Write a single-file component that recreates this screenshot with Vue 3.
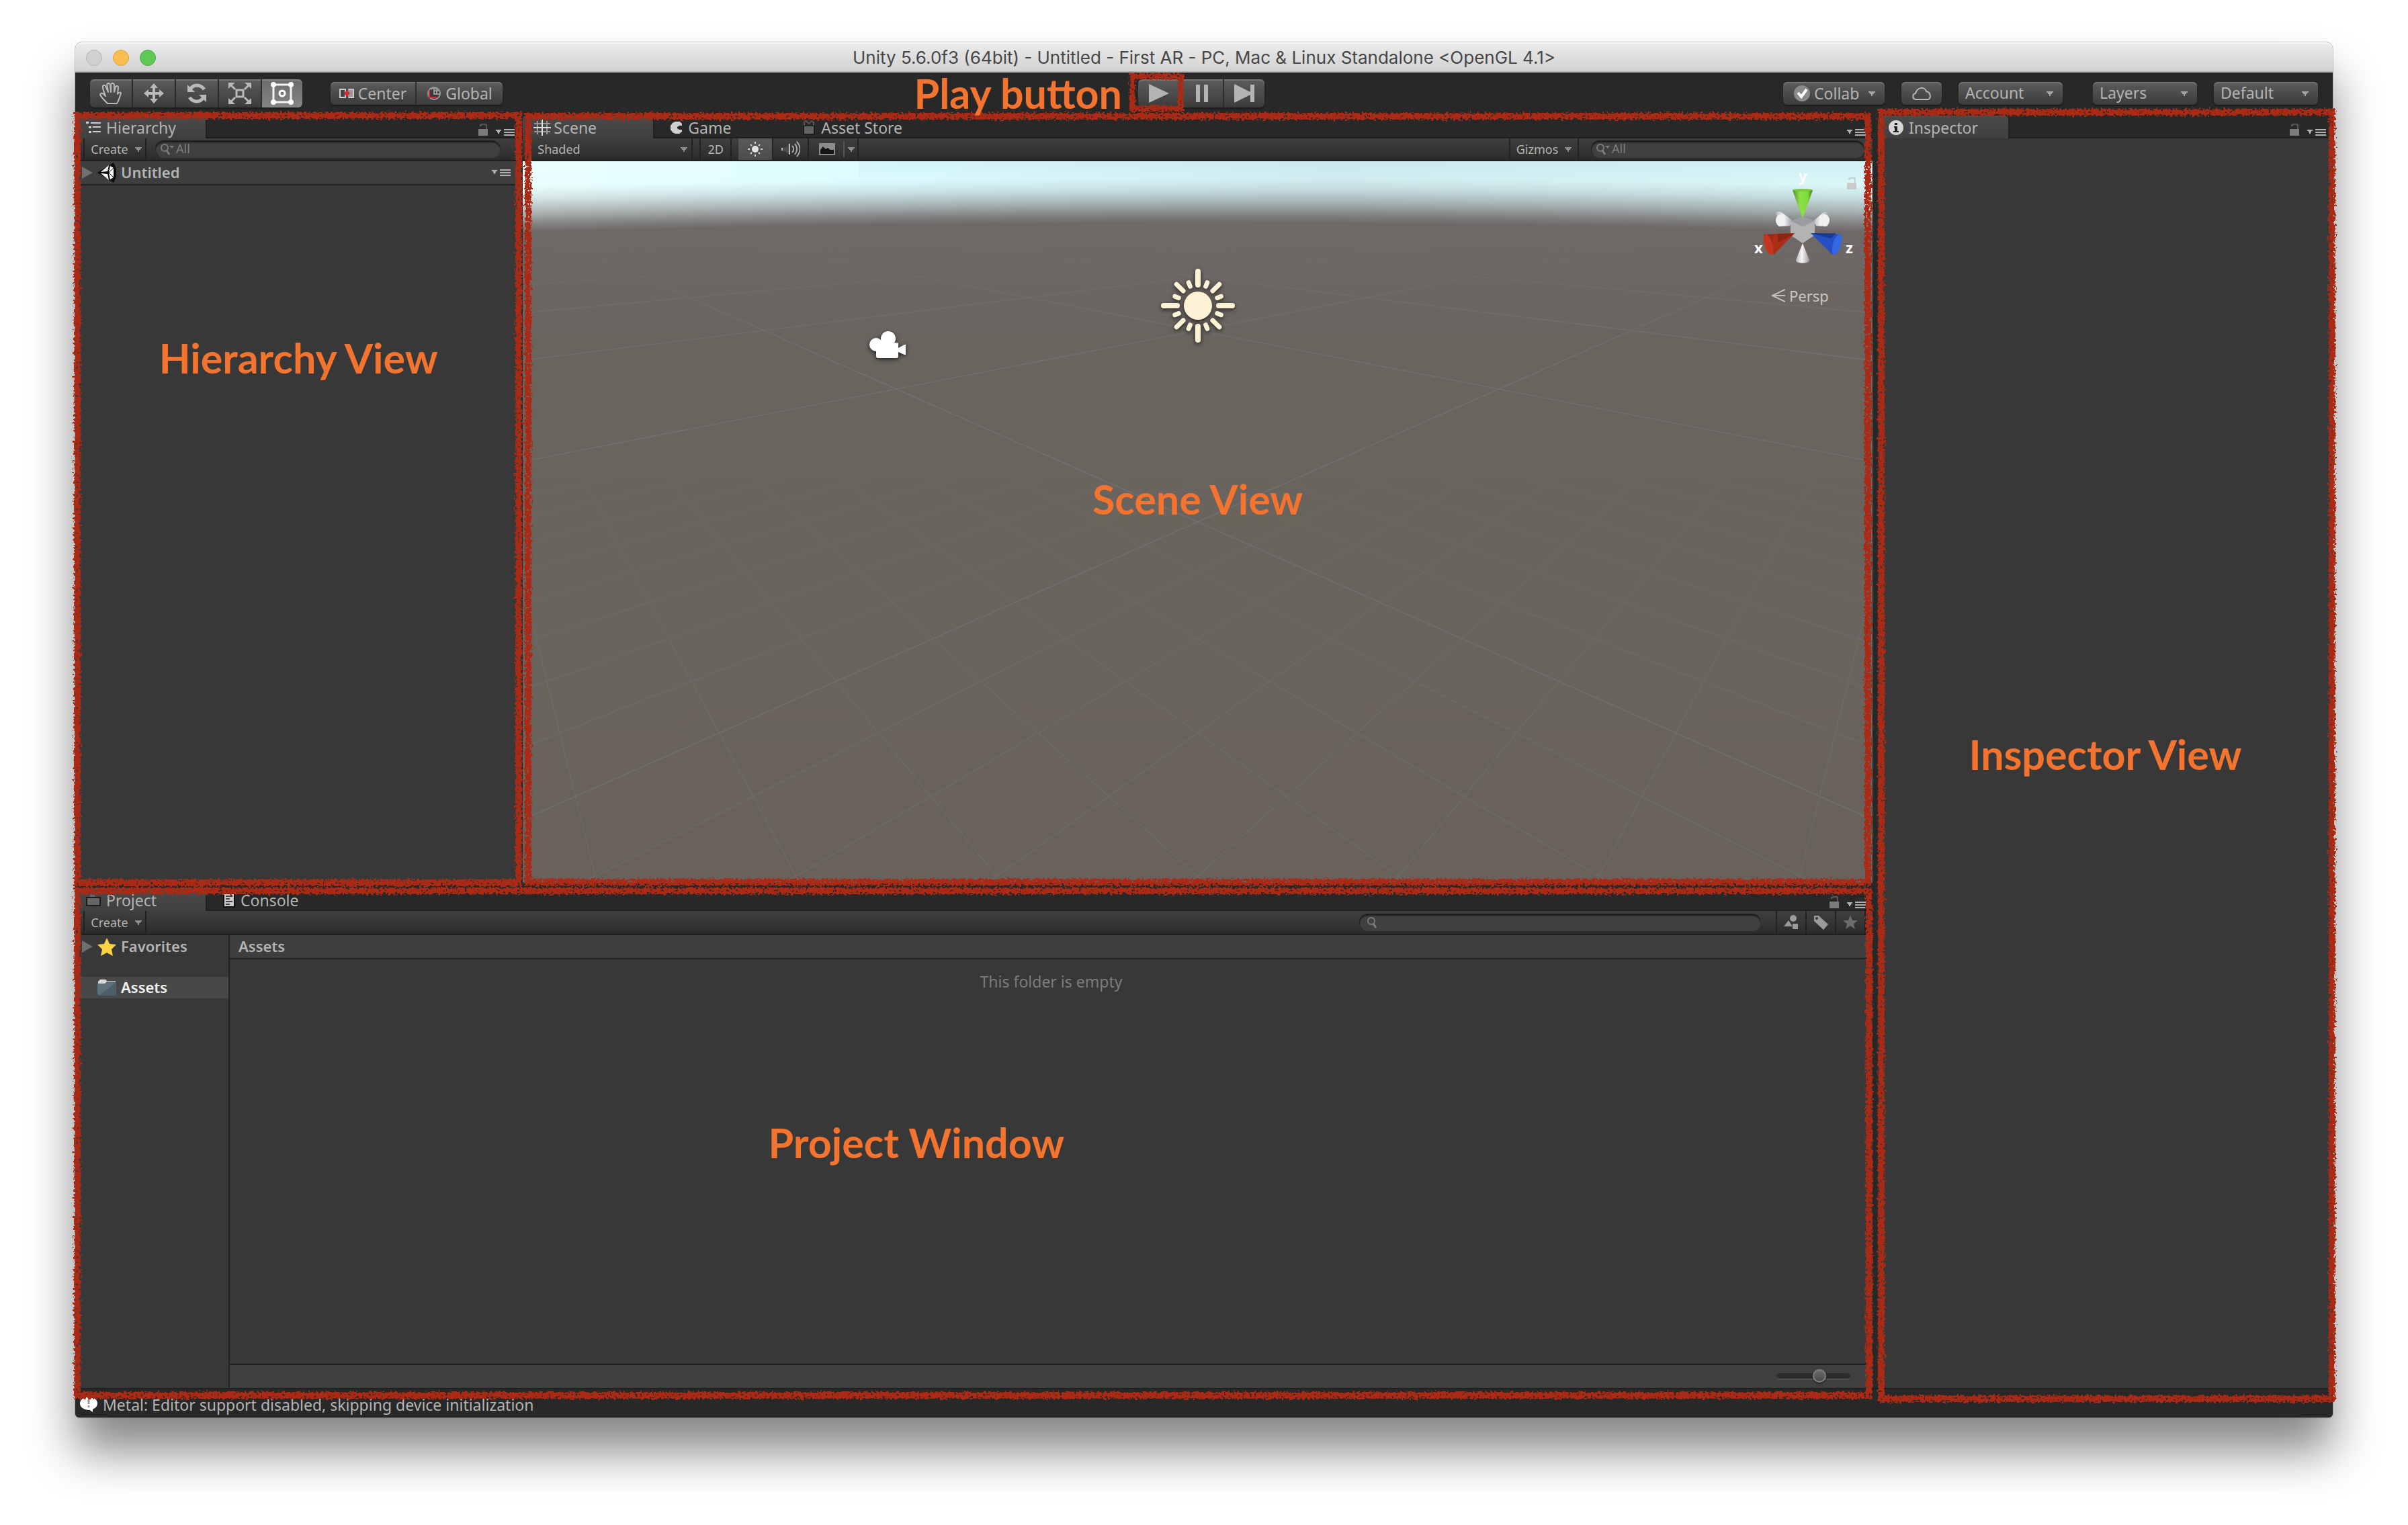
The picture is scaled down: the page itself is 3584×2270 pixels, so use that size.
<script setup>
import { ref } from 'vue'

const zoomLevel = ref(60)
const activeTool = ref('rect')

// Ground grid: every line passes through a vanishing point on either side.
const VP_LEFT = { x: -149, y: 28 }
const VP_RIGHT = { x: 2157, y: 28 }
const REACH = 1153

function gridLine(inverseDepth, side) {
  const slope = 1 / inverseDepth / REACH
  const run = 2400
  const start = side === 'left' ? VP_LEFT : VP_RIGHT
  const dir = side === 'left' ? 1 : -1
  return {
    x1: start.x,
    y1: start.y,
    x2: start.x + dir * run,
    y2: start.y + run * slope
  }
}

const majorLines = []
for (let m = 0; m < 7; m++) {
  for (const side of ['left', 'right']) {
    majorLines.push(gridLine(0.001965 + 0.0025 * m, side))
  }
}

const minorLines = []
for (let n = -7; n < 14; n++) {
  if (n === 0 || n === 10) continue
  for (const side of ['left', 'right']) {
    minorLines.push(gridLine(0.001965 + 0.00025 * n, side))
  }
}

const longRays = [0, 90, 180, 270]
const midRays = [45, 135, 225, 315]
const shortRays = [22, 68, 112, 158, 202, 248, 292, 338]
</script>

<template>
  <div class="page">
    <svg class="defs" width="0" height="0" aria-hidden="true">
      <filter id="crayon" x="-2%" y="-2%" width="104%" height="104%">
        <feTurbulence type="fractalNoise" baseFrequency="0.28" numOctaves="2" seed="4" result="noise" />
        <feDisplacementMap in="SourceGraphic" in2="noise" scale="9" xChannelSelector="R" yChannelSelector="G" result="rough" />
        <feColorMatrix in="noise" type="matrix" values="0 0 0 0 0  0 0 0 0 0  0 0 0 0 0  0 0 14 0 -4" result="grain" />
        <feComposite in="rough" in2="grain" operator="in" />
      </filter>
      <symbol id="caret" viewBox="0 0 10 7"><path d="M0 0h10v2H8v2H6v3H4V4H2V2H0z" /></symbol>
      <symbol id="lock" viewBox="0 0 14 18"><path d="M0 8h14v10H0z" /><path d="M3 4V2h2V1h6v1h1v6" fill="none" stroke="currentColor" stroke-width="2" opacity=".55" /></symbol>
      <symbol id="menu" viewBox="0 0 28 10"><path d="M0 1h8v2H6v2H5v2H3V5H2V3H0z" /><path d="M12 0h16v2H12zM12 4h16v2H12zM12 8h16v2H12z" /></symbol>
      <symbol id="loupe" viewBox="0 0 20 18"><circle cx="6" cy="6" r="5" fill="none" stroke="currentColor" stroke-width="2" /><path d="M9 10l4 6" stroke="currentColor" stroke-width="3" /></symbol>
      <symbol id="fold" viewBox="0 0 16 18"><path d="M0 0l16 9-16 9z" /></symbol>
    </svg>

    <div class="window">
      <header class="titlebar">
        <div class="lights">
          <button class="light off" aria-label="Close"></button>
          <button class="light amber" aria-label="Minimize"></button>
          <button class="light green" aria-label="Zoom"></button>
        </div>
        <h1>Unity 5.6.0f3 (64bit) - Untitled - First AR - PC, Mac &amp; Linux Standalone &lt;OpenGL 4.1&gt;</h1>
      </header>

      <div class="toolbar">
        <div class="tools-left">
          <div class="group tall">
            <button class="tool" aria-label="Hand" @click="activeTool = 'hand'">
              <svg width="36" height="34" viewBox="0 0 36 34" fill="none" stroke="#b9b9b9" stroke-width="2" stroke-linejoin="round"><path d="M13 32c-4-4-9-9-11-13 1-3 4-3 6 0l2 2C8 15 5 9 6 6c2-2 4-1 5 2l3 7-2-11c1-3 4-3 5 0l1 11V4c1-3 4-3 5 0v11l2-8c2-2 4-1 4 1l-1 10c2-3 5-3 5-1-2 5-3 11-6 15z" /></svg>
            </button>
            <button class="tool" aria-label="Move" @click="activeTool = 'move'">
              <svg width="30" height="30" viewBox="0 0 30 30" fill="#b9b9b9"><path d="M13 5h4v8h8v4h-8v8h-4v-8H5v-4h8z" /><path d="M15 0l6 7H9zM15 30l6-7H9zM0 15l7-6v12zM30 15l-7-6v12z" /></svg>
            </button>
            <button class="tool" aria-label="Rotate" @click="activeTool = 'rotate'">
              <svg width="30" height="30" viewBox="0 0 30 30"><g fill="none" stroke="#b9b9b9" stroke-width="5"><path d="M5 9c5-8 15-8 21 0" /><path d="M25 21c-5 8-15 8-21 0" /></g><path d="M1 2v11h11zM29 28V17H18z" fill="#b9b9b9" /></svg>
            </button>
            <button class="tool" aria-label="Scale" @click="activeTool = 'scale'">
              <svg width="34" height="32" viewBox="0 0 34 32"><path d="M12 11h10v10H12z" fill="none" stroke="#b9b9b9" stroke-width="3" /><path d="M3 3l7 7M31 3l-7 7M3 29l7-7M31 29l-7-7" stroke="#b9b9b9" stroke-width="3" /><path d="M0 0h10L0 9zM34 0H24l10 9zM0 32h10L0 23zM34 32H24l10-9z" fill="#b9b9b9" /></svg>
            </button>
            <button class="tool" :class="{ active: activeTool === 'rect' }" aria-label="Rect" @click="activeTool = 'rect'">
              <svg width="36" height="34" viewBox="0 0 36 34"><path d="M5 4h26v26H5z" fill="none" stroke="#f4f4f4" stroke-width="3" /><g fill="#fff"><circle cx="5" cy="4" r="4" /><circle cx="31" cy="4" r="4" /><circle cx="5" cy="30" r="4" /><circle cx="31" cy="30" r="4" /></g><circle cx="18" cy="17" r="4" fill="none" stroke="#fff" stroke-width="3" /></svg>
            </button>
          </div>
          <div class="group">
            <button class="pivot">
              <svg width="22" height="14" viewBox="0 0 22 14"><path d="M1 1h8v12H1z" fill="#444" stroke="#ccc" stroke-width="2" /><path d="M13 0h9v14h-9z" fill="#999" /><path d="M14 1h7v12h-7" stroke="#ccc" stroke-width="2" fill="none" /><path d="M11 2l5 5-5 5-4-5z" fill="#d22c3c" /></svg>
              <span>Center</span>
            </button>
            <button class="pivot">
              <svg width="22" height="22" viewBox="0 0 22 22"><circle cx="11" cy="11" r="9" fill="#3a3a3a" stroke="#999" stroke-width="2" /><path d="M11 2v10h9M6 5c3-2 8-2 11 0M15 3v9M11 7h8" stroke="#999" stroke-width="2" fill="none" /><path d="M4 6v11h11" fill="none" stroke="#d22c3c" stroke-width="2" /></svg>
              <span>Global</span>
            </button>
          </div>
        </div>

        <div class="playback">
          <span class="label play-label">Play button</span>
          <div class="group tall">
            <button class="tool" aria-label="Play">
              <svg width="30" height="28" viewBox="0 0 30 28" fill="#b4b4b4"><path d="M0 0l30 14L0 28z" /></svg>
            </button>
            <button class="tool" aria-label="Pause">
              <svg width="18" height="26" viewBox="0 0 18 26" fill="#b4b4b4"><path d="M0 0h6v26H0zM12 0h6v26h-6z" /></svg>
            </button>
            <button class="tool" aria-label="Step">
              <svg width="30" height="28" viewBox="0 0 30 28" fill="#b4b4b4"><path d="M0 0l24 12V1h6v26h-6V16L0 28z" /></svg>
            </button>
          </div>
          <i class="frame play-frame"></i>
        </div>

        <div class="tools-right">
          <button class="pill collab">
            <svg width="24" height="28" viewBox="0 0 24 28"><circle cx="12" cy="14" r="12" fill="#8a8a8a" /><path d="M6 13l5 6 8-11" fill="none" stroke="#fff" stroke-width="4" /></svg>
            <span>Collab</span>
            <svg class="caret" width="10" height="7"><use href="#caret" /></svg>
          </button>
          <button class="pill cloud" aria-label="Cloud services">
            <svg width="28" height="20" viewBox="0 0 28 20" fill="none" stroke="#b9b9b9" stroke-width="2"><path d="M5 19c-5-1-5-8 0-9C7 1 19-1 21 7c6 1 8 9 3 12z" /></svg>
          </button>
          <label class="drop account"><select aria-label="Account"><option>Account</option></select><svg class="caret" width="10" height="7"><use href="#caret" /></svg></label>
          <label class="drop layers"><select aria-label="Layers"><option>Layers</option></select><svg class="caret" width="10" height="7"><use href="#caret" /></svg></label>
          <label class="drop"><select aria-label="Layout"><option>Default</option></select><svg class="caret" width="10" height="7"><use href="#caret" /></svg></label>
        </div>
      </div>

      <main class="dock">
        <div class="left">
          <div class="upper">
            <section class="panel hierarchy">
              <div class="tabs">
                <button class="tab selected">
                  <svg width="22" height="18" viewBox="0 0 22 18" fill="#cfcfcf"><path d="M0 0h4v3H0zM7 1h15v2H7zM4 7h4v3H4zM10 7h12v2H10zM4 14h4v3H4zM10 14h12v2H10z" /></svg>
                  <span>Hierarchy</span>
                </button>
                <div class="tab-tools">
                  <svg class="lock" width="14" height="18"><use href="#lock" /></svg>
                  <svg class="menu" width="28" height="10"><use href="#menu" /></svg>
                </div>
              </div>
              <div class="strip">
                <button class="strip-btn create">Create <svg class="caret" width="10" height="7"><use href="#caret" /></svg></button>
                <label class="search hier-search">
                  <svg width="20" height="18"><use href="#loupe" /><path d="M13 3h7l-3 4z" fill="currentColor" /></svg>
                  <input type="text" placeholder="All" aria-label="Search hierarchy" />
                </label>
              </div>
              <div class="row scene-row">
                <svg class="fold" width="16" height="18"><use href="#fold" /></svg>
                <svg width="28" height="30" viewBox="0 0 28 30"><path d="M0 15L24 0l4 9v12l-4 9z" fill="#0c0c0c" /><path d="M5 14L17 4l-2 9zM5 16l12 10-2-9zM19 5l5 3v14l-5 3-2-9 1-1-1-1z" fill="#fff" /><path d="M17 15l7-7M17 15l7 7" stroke="#0c0c0c" stroke-width="1" /></svg>
                <strong>Untitled</strong>
                <svg class="menu push" width="28" height="10"><use href="#menu" /></svg>
              </div>
              <i class="frame hier-frame"></i>
              <span class="label hier-label">Hierarchy View</span>
            </section>

            <section class="panel scene">
              <div class="tabs">
                <button class="tab selected snug">
                  <svg width="26" height="24" viewBox="0 0 26 24" fill="none" stroke-width="2"><path d="M6 2v20M20 2v20M1 6h24M1 18h24" stroke="#999" /><path d="M13 0v24M0 12h26" stroke="#e0e0e0" /></svg>
                  <span>Scene</span>
                </button>
                <button class="tab">
                  <svg width="18" height="20" viewBox="0 0 18 20"><path d="M12 1H7L3 3 0 7v6l3 4 4 2h6l4-3v-3h-4l-3-2V9l3-2h4V4l-3-3z" fill="#cfcfcf" /></svg>
                  <span>Game</span>
                </button>
                <button class="tab">
                  <svg width="20" height="22" viewBox="0 0 20 22"><path d="M1 8h18v14H1z" fill="#1a1a1a" /><path d="M3 9h14v11H3z" fill="#626262" /><path d="M3 8V3l3-2 4 4 4-4 3 2v5" fill="none" stroke="#555" stroke-width="2" /></svg>
                  <span>Asset Store</span>
                </button>
                <div class="tab-tools"><svg class="menu" width="28" height="10"><use href="#menu" /></svg></div>
              </div>
              <div class="strip">
                <label class="shading"><select aria-label="Draw mode"><option>Shaded</option></select><svg class="caret" width="10" height="7"><use href="#caret" /></svg></label>
                <button class="strip-btn two-d">2D</button>
                <button class="strip-btn lit" aria-label="Lighting">
                  <svg width="22" height="22" viewBox="0 0 22 22"><circle cx="11" cy="11" r="5" fill="#e4e4e4" /><path d="M11 0v3M11 19v3M0 11h3M19 11h3M4 4l2 2M16 16l2 2M4 18l2-2M16 6l2-2" stroke="#d4d4d4" stroke-width="2" /></svg>
                </button>
                <button class="strip-btn audio" aria-label="Audio">
                  <svg width="28" height="24" viewBox="0 0 28 24"><path d="M0 10h5l8-7v18l-8-6H0z" fill="#4a4a4a" /><path d="M12 4v16M1 10v4" stroke="#bbb" stroke-width="2" /><path d="M16 7c3 3 3 7 0 10M20 4c4 5 4 11 0 16M23 1c6 7 6 15 0 22" fill="none" stroke="#a9a9a9" stroke-width="2" /></svg>
                </button>
                <button class="strip-btn effects" aria-label="Effects">
                  <svg width="24" height="18" viewBox="0 0 24 18"><path d="M0 0h24v18H0z" fill="#8c8c8c" /><path d="M2 16v-6l4-5 4 4 3-2 4 3h5v6z" fill="#151515" /></svg>
                  <i class="tick"></i>
                  <svg class="caret" width="10" height="7"><use href="#caret" /></svg>
                </button>
                <button class="strip-btn gizmos">Gizmos <svg class="caret" width="10" height="7"><use href="#caret" /></svg></button>
                <label class="search scene-search">
                  <svg width="20" height="18"><use href="#loupe" /><path d="M13 3h7l-3 4z" fill="currentColor" /></svg>
                  <input type="text" placeholder="All" aria-label="Search scene" />
                </label>
              </div>

              <div class="viewport">
                <svg class="world" viewBox="0 0 2008 1074" preserveAspectRatio="none" aria-hidden="true">
                  <defs>
                    <linearGradient id="ground" x1="0" y1="0" x2="0" y2="1">
                      <stop offset="0" stop-color="#6f6969" /><stop offset=".1" stop-color="#6e6867" />
                      <stop offset=".25" stop-color="#6a645f" /><stop offset="1" stop-color="#69625c" />
                    </linearGradient>
                    <linearGradient id="air" x1="0" y1="0" x2="1" y2="0">
                      <stop offset="0" stop-color="#ebffff" /><stop offset=".28" stop-color="#dcfcff" />
                      <stop offset=".6" stop-color="#d2edf0" /><stop offset="1" stop-color="#daf7f9" />
                    </linearGradient>
                    <radialGradient id="haze" gradientUnits="userSpaceOnUse" cx="0" cy="0" r="1" gradientTransform="translate(1004 337) scale(4102 335)">
                      <stop offset=".73" stop-color="#000" /><stop offset=".765" stop-color="#2c2c2c" />
                      <stop offset=".82" stop-color="#888" /><stop offset=".88" stop-color="#d8d8d8" />
                      <stop offset=".93" stop-color="#fff" />
                    </radialGradient>
                    <linearGradient id="zenith" x1="0" y1="0" x2="0" y2="1">
                      <stop offset="0" stop-color="#b4d8e6" stop-opacity=".45" /><stop offset="1" stop-color="#b4d8e6" stop-opacity="0" />
                    </linearGradient>
                    <linearGradient id="farFade" x1="0" y1="100" x2="0" y2="300" gradientUnits="userSpaceOnUse">
                      <stop offset="0" stop-color="#000" /><stop offset="1" stop-color="#fff" />
                    </linearGradient>
                    <linearGradient id="nearFade" x1="0" y1="360" x2="0" y2="800" gradientUnits="userSpaceOnUse">
                      <stop offset="0" stop-color="#000" /><stop offset="1" stop-color="#fff" />
                    </linearGradient>
                    <mask id="sky"><rect width="2008" height="130" fill="url(#haze)" /></mask>
                    <mask id="far" maskUnits="userSpaceOnUse" x="0" y="0" width="2008" height="1074"><rect width="2008" height="1074" fill="url(#farFade)" /></mask>
                    <mask id="near" maskUnits="userSpaceOnUse" x="0" y="0" width="2008" height="1074"><rect width="2008" height="1074" fill="url(#nearFade)" /></mask>
                  </defs>
                  <rect width="2008" height="1074" fill="url(#ground)" />
                  <g mask="url(#far)" stroke="#828a87" stroke-width="1.5" opacity=".34">
                    <line v-for="(l, i) in majorLines" :key="i" v-bind="l" />
                  </g>
                  <g mask="url(#near)" stroke="#7b8581" stroke-width="1.5" opacity=".24">
                    <line v-for="(l, i) in minorLines" :key="i" v-bind="l" />
                  </g>
                  <rect width="2008" height="130" fill="url(#air)" mask="url(#sky)" />
                  <rect x="500" width="1508" height="34" fill="url(#zenith)" opacity=".5" />
                </svg>

                <svg class="sun" width="124" height="124" viewBox="-62 -62 124 124">
                  <g stroke="#fdf1d6" stroke-linecap="round">
                    <line v-for="a in longRays" :key="'l' + a" x1="0" y1="-31" x2="0" y2="-51" stroke-width="8" :transform="`rotate(${a})`" />
                    <line v-for="a in midRays" :key="'m' + a" x1="0" y1="-31" x2="0" y2="-45" stroke-width="7" :transform="`rotate(${a})`" />
                    <line v-for="a in shortRays" :key="'s' + a" x1="0" y1="-31" x2="0" y2="-37" stroke-width="7" :transform="`rotate(${a})`" />
                  </g>
                  <circle r="21" fill="#fdf1d6" />
                </svg>

                <svg class="camera" width="54" height="40" viewBox="0 0 54 40" fill="#fff">
                  <circle cx="10" cy="20" r="10" /><circle cx="28" cy="11" r="11" />
                  <path d="M8 17h33c2 0 2 2 2 3v5l9-5h2v15h-2l-9-4v6c0 2-1 3-3 3H13c-2 0-3-1-3-3V29z" />
                </svg>

                <div class="gizmo">
                  <svg width="160" height="160" viewBox="0 -10 160 160">
                    <defs>
                      <linearGradient id="gy" x1="0" x2="1"><stop offset="0" stop-color="#4d8a24" /><stop offset=".35" stop-color="#8be046" /><stop offset=".75" stop-color="#83da3e" /><stop offset="1" stop-color="#3d6b1c" /></linearGradient>
                      <linearGradient id="gw" x1="0" x2="1"><stop offset="0" stop-color="#b5b5ba" /><stop offset=".45" stop-color="#f6f6f8" /><stop offset="1" stop-color="#98989c" /></linearGradient>
                    </defs>
                    <path d="M38 66c-5-6 2-8 8-4l16 12-5 7-17 1z" fill="url(#gw)" /><ellipse cx="43" cy="73" rx="7" ry="9" fill="#f1f1f4" />
                    <path d="M114 66c5-6-2-8-8-4L92 74l4 7 17 1z" fill="url(#gw)" /><ellipse cx="109" cy="73" rx="7" ry="9" fill="#f1f1f4" />
                    <path d="M58 74l18-6 18 6v21l-18 12-18-12z" fill="#b3b3b5" /><path d="M58 74l18-6 18 6-18 8z" fill="#9a9ba3" />
                    <path d="M61 28h30L76 70z" fill="url(#gy)" /><ellipse cx="76" cy="28" rx="15" ry="2" fill="#79c93c" />
                    <path d="M18 94l46-2-31 32z" fill="#9d2915" /><path d="M34 93l30-1-31 32-3-18z" fill="#ac2e18" /><path d="M38 93h26L40 106z" fill="#6c1a0c" opacity=".5" /><ellipse cx="25" cy="109" rx="6" ry="16" transform="rotate(-17 25 109)" fill="#c33720" />
                    <path d="M134 94l-46-2 32 32z" fill="#2450c4" /><path d="M88 92h38l-8 8z" fill="#14307c" opacity=".7" /><ellipse cx="127" cy="109" rx="6" ry="16" transform="rotate(17 127 109)" fill="#3567e2" />
                    <path d="M76 107l10 25c1 6-21 6-20 0z" fill="url(#gw)" />
                    <g class="axis"><text x="70" y="15">y</text><text x="4" y="122">x</text><text x="140" y="122">z</text></g>
                  </svg>
                  <button class="persp">
                    <svg width="20" height="20" viewBox="0 0 20 20" fill="none" stroke="#c2c0be" stroke-width="2"><path d="M20 1L1 10l19 9M1 10h19" /></svg>
                    <span>Persp</span>
                  </button>
                </div>
                <svg class="view-lock" width="14" height="18"><use href="#lock" /></svg>
              </div>
              <i class="frame scene-frame"></i>
              <span class="label scene-label">Scene View</span>
            </section>
          </div>

          <section class="panel project">
            <div class="tabs">
              <button class="tab selected">
                <svg width="22" height="18" viewBox="0 0 22 18"><path d="M1 5h20v12H1z" fill="#666" stroke="#1c1c1c" stroke-width="2" /><path d="M6 4V1h7v3" fill="#666" /></svg>
                <span>Project</span>
              </button>
              <button class="tab">
                <svg width="18" height="22" viewBox="0 0 18 22"><path d="M0 0h18v22H0z" fill="#111" /><path d="M2 2h14v18H2z" fill="#ccc" /><path d="M4 5h10M4 9h6M4 13h10M4 17h6" stroke="#444" stroke-width="2" /></svg>
                <span>Console</span>
              </button>
              <div class="tab-tools">
                <svg class="lock" width="14" height="18"><use href="#lock" /></svg>
                <svg class="menu" width="28" height="10"><use href="#menu" /></svg>
              </div>
            </div>
            <div class="strip">
              <button class="strip-btn create">Create <svg class="caret" width="10" height="7"><use href="#caret" /></svg></button>
              <label class="search project-search">
                <svg width="20" height="18"><use href="#loupe" /></svg>
                <input type="text" aria-label="Search project" />
              </label>
              <button class="strip-btn filter" aria-label="Search by type">
                <svg width="22" height="22" viewBox="0 0 22 22" fill="#9a9a9a"><circle cx="14" cy="5" r="5" /><path d="M7 8l6 9H0zM13 13h8v8h-8z" /></svg>
              </button>
              <button class="strip-btn filter" aria-label="Search by label">
                <svg width="22" height="22" viewBox="0 0 22 22"><path d="M1 1h7l14 13-7 8L1 9z" fill="#9a9a9a" /><circle cx="5" cy="5" r="2" fill="#333" /></svg>
              </button>
              <button class="strip-btn filter" aria-label="Save search">
                <svg width="22" height="22" viewBox="0 0 22 22"><path d="M11 0l3 8h8l-6 5 2 8-7-5-7 5 2-8-6-5h8z" fill="#6c6c6c" /></svg>
              </button>
            </div>
            <div class="browser">
              <nav class="tree">
                <div class="node">
                  <svg class="fold" width="16" height="18"><use href="#fold" /></svg>
                  <svg width="28" height="28" viewBox="0 0 28 28"><path d="M14 1l4 9 10 1-7 7 2 10-9-5-9 5 2-10-7-7 10-1z" fill="#fbd444" /></svg>
                  <strong>Favorites</strong>
                </div>
                <div class="node chosen">
                  <i class="no-fold"></i>
                  <svg width="28" height="24" viewBox="0 0 28 24"><path d="M1 3l3-3h8l2 2h13v6H1z" fill="#d9d9d9" /><path d="M0 6h11l3-3h14v18l-2 3H2l-2-3z" fill="#5d717b" /><path d="M28 4v17l-2 3H2z" fill="#4c5f69" /></svg>
                  <strong>Assets</strong>
                </div>
              </nav>
              <div class="files">
                <div class="crumb"><strong>Assets</strong></div>
                <p class="empty">This folder is empty</p>
                <div class="foot"><input type="range" min="0" max="100" v-model="zoomLevel" aria-label="Icon size" /></div>
              </div>
            </div>
            <i class="frame project-frame"></i>
            <span class="label project-label">Project Window</span>
          </section>
        </div>

        <section class="panel inspector">
          <div class="tabs">
            <button class="tab selected">
              <svg width="22" height="22" viewBox="0 0 22 22"><circle cx="11" cy="11" r="11" fill="#d6d6d6" /><path d="M9 4h4v3H9zM8 9h5v7h2v2H7v-2h2v-5H8z" fill="#222" /></svg>
              <span>Inspector</span>
            </button>
            <div class="tab-tools">
              <svg class="lock" width="14" height="18"><use href="#lock" /></svg>
              <svg class="menu" width="28" height="10"><use href="#menu" /></svg>
            </div>
          </div>
          <i class="frame inspector-frame"></i>
          <span class="label inspector-label">Inspector View</span>
        </section>
      </main>

      <footer class="status">
        <svg width="26" height="24" viewBox="0 0 26 24"><ellipse cx="13" cy="10" rx="13" ry="10" fill="#fff" /><path d="M12 18h7v5z" fill="#fff" /><path d="M13 4v7M13 13v3" stroke="#999" stroke-width="3" /></svg>
        <span>Metal: Editor support disabled, skipping device initialization</span>
      </footer>
    </div>
  </div>
</template>

<style>
body {
  background: #fff;
}
</style>

<style scoped>
.page {
  box-sizing: border-box;
  min-height: 100vh;
  padding: 63px 112px 160px;
  display: flex;
  background: #fff;
  overflow: hidden;
  font: 23px/30px "Noto Sans", "Open Sans", sans-serif;
  color: #b4b4b4;
}
.page * {
  box-sizing: border-box;
}
.defs {
  position: absolute;
}
svg {
  flex: none;
  display: block;
}
button,
select,
input {
  font: inherit;
  color: inherit;
  border: 0;
  margin: 0;
  padding: 0;
  background: none;
  border-radius: 0;
  outline: 0;
}
.window {
  flex: 1;
  min-width: 0;
  display: flex;
  flex-direction: column;
  background: #282828;
  border-radius: 10px 10px 6px 6px;
  box-shadow: 0 50px 70px rgba(0, 0, 0, 0.48), 0 0 2px rgba(0, 0, 0, 0.5);
}
.titlebar {
  height: 45px;
  flex: none;
  display: grid;
  grid-template-columns: 1fr auto 1fr;
  align-items: center;
  padding: 2px 16px 0;
  border-radius: 10px 10px 0 0;
  background: linear-gradient(#ececec, #d2d2d2);
  border-bottom: 2px solid #b0b0b0;
  box-shadow: inset 0 2px #f6f6f6;
}
.titlebar h1 {
  margin: 0;
  font: 400 26px/30px Inter, "Noto Sans", sans-serif;
  color: #474747;
  white-space: nowrap;
}
.lights {
  display: flex;
  gap: 16px;
}
.light {
  width: 24px;
  height: 24px;
  border-radius: 50%;
  border: 1px solid #b4b4b4;
  background: #d0d0d0;
}
.light.amber {
  background: #f9be4f;
  border-color: #dda038;
}
.light.green {
  background: #60c855;
  border-color: #48a93c;
}

.toolbar {
  position: relative;
  z-index: 2;
  height: 64px;
  flex: none;
  display: grid;
  grid-template-columns: 1560fr auto 1568fr;
  align-items: center;
  padding: 0 22px 2px;
}
.tools-left,
.tools-right {
  display: flex;
  align-items: center;
}
.tools-left {
  gap: 42px;
}
.tools-right {
  justify-content: flex-end;
  gap: 25px;
}
.group {
  display: flex;
  height: 34px;
}
.group.tall {
  height: 42px;
}
.group > button,
.pill,
.drop {
  background: linear-gradient(#5c5c5c, #3b3b3b);
  box-shadow: inset 0 2px rgba(255, 255, 255, 0.16), 0 2px 2px rgba(0, 0, 0, 0.35);
}
.group > button {
  display: flex;
  align-items: center;
  justify-content: center;
  border-right: 2px solid #303030;
}
.group > button:first-child {
  border-radius: 6px 0 0 6px;
}
.group > button:last-child {
  border-radius: 0 6px 6px 0;
  border-right: 0;
}
.tool {
  width: 64px;
}
.tool:last-child {
  width: 60px;
}
.group > .tool.active {
  background: linear-gradient(#6c6c6c, #858585);
}
.pivot {
  width: 128px;
  gap: 6px;
}
.playback {
  position: relative;
}
.pill,
.drop {
  height: 34px;
  border-radius: 6px;
  display: flex;
  align-items: center;
}
.collab {
  width: 151px;
  padding: 0 14px 0 16px;
  gap: 6px;
}
.cloud {
  width: 60px;
  justify-content: center;
}
.drop {
  width: 155px;
  padding-right: 14px;
}
.layers {
  margin-left: 20px;
}
select {
  appearance: none;
  flex: 1;
  min-width: 0;
  height: 100%;
}
.drop select {
  padding: 0 0 2px 10px;
}
.caret {
  fill: #a4a4a4;
}
.pill .caret {
  margin-left: auto;
}
.strip .caret {
  fill: #8e8e8e;
}

.dock {
  flex: 1;
  display: flex;
  gap: 8px;
  min-height: 0;
}
.left {
  flex: 2675 1 0;
  min-width: 0;
  display: flex;
  flex-direction: column;
  gap: 8px;
}
.upper {
  flex: 1142 1 0;
  display: flex;
  gap: 2px;
}
.panel {
  position: relative;
  min-width: 0;
  display: flex;
  flex-direction: column;
  background: #383838;
}
.hierarchy {
  flex: 664 1 0;
}
.scene {
  flex: 2008 1 0;
}
.project {
  flex: 744 1 0;
}
.inspector {
  flex: 677 1 0;
}
.tabs {
  height: 34px;
  flex: none;
  display: flex;
  background: #282828;
  box-shadow: inset 0 -2px #1f1f1f;
}
.tab {
  width: 196px;
  display: flex;
  align-items: center;
  gap: 8px;
  padding: 2px 0 0 24px;
  text-align: left;
  white-space: nowrap;
}
.tab.selected {
  padding-left: 16px;
  background: linear-gradient(#4a4a4a, #404040);
  border-right: 2px solid #222;
  border-radius: 6px 6px 0 0;
}
.tab.snug {
  gap: 4px;
}
.tab-tools {
  margin-left: auto;
  display: flex;
  align-items: flex-end;
  gap: 12px;
  padding: 0 10px 4px 0;
}
.lock {
  color: #7c7c7c;
  fill: #7c7c7c;
}
.menu {
  fill: #b2b2b2;
}
.strip {
  height: 34px;
  flex: none;
  display: flex;
  align-items: stretch;
  background: linear-gradient(#3f3f3f, #2b2b2b);
  border-bottom: 2px solid #1f1f1f;
  font-size: 18px;
}
.strip-btn {
  display: flex;
  align-items: center;
  justify-content: center;
  border-right: 2px solid #222;
}
.create {
  margin-left: 12px;
  width: 94px;
  gap: 10px;
  padding-left: 4px;
  border-left: 2px solid #222;
}
.search {
  position: relative;
  align-self: center;
  height: 26px;
  display: flex;
  color: #7c7c7c;
}
.search svg {
  position: absolute;
  left: 8px;
  top: 5px;
}
.search input {
  width: 100%;
  height: 26px;
  padding: 0 12px 2px 31px;
  border-radius: 13px;
  background: #404040;
  box-shadow: inset 0 3px 2px #1e1e1e, inset 1px 0 #2c2c2c;
}
.search input::placeholder {
  color: #7f7f7f;
  opacity: 1;
}
.hier-search {
  flex: 1;
  margin: 0 31px 0 13px;
}
.scene-search {
  width: 407px;
  margin: 0 12px 0 18px;
}
.project-search {
  width: 598px;
  margin: 0 22px 0 auto;
}
.row {
  height: 36px;
  display: flex;
  align-items: center;
  background: #3e3e3e;
  border-bottom: 2px solid #222;
  padding: 0 16px 0 10px;
}
.row > svg {
  margin-right: 7px;
}
.row > .push {
  margin: 0 0 0 auto;
}
.fold {
  fill: #707070;
}
strong {
  font-weight: 600;
  font-size: 22px;
  padding-bottom: 2px;
}
.shading {
  width: 253px;
  display: flex;
  align-items: center;
  padding: 0 6px 0 22px;
  border-right: 2px solid #222;
}
.two-d {
  width: 48px;
  margin-left: 10px;
  border-left: 2px solid #222;
}
.lit {
  width: 52px;
  margin-left: 10px;
  background: linear-gradient(#5a5a5a, #4c4c4c);
}
.audio {
  width: 53px;
}
.effects {
  width: 74px;
  gap: 5px;
  padding-left: 10px;
}
.tick {
  width: 2px;
  height: 24px;
  margin-left: 7px;
  background: #555;
}
.gizmos {
  width: 104px;
  gap: 10px;
  margin-left: auto;
  border-left: 2px solid #222;
}
.viewport {
  position: relative;
  flex: 1;
  overflow: hidden;
  background: #69625c;
}
.world {
  position: absolute;
  inset: 0;
  width: 100%;
  height: 100%;
}
.sun,
.camera {
  position: absolute;
  transform: translate(-50%, -50%);
  filter: drop-shadow(0 2px 3px rgba(0, 0, 0, 0.7));
}
.sun {
  left: 50%;
  top: 20%;
}
.camera {
  left: 27%;
  top: 25.4%;
}
.gizmo {
  position: absolute;
  right: 20px;
  top: 5px;
  width: 160px;
}
.axis {
  fill: #fff;
  font: 700 22px "Noto Sans", sans-serif;
}
.persp {
  display: flex;
  align-items: center;
  gap: 6px;
  margin: 20px 0 0 30px;
  font-size: 22px;
  color: #c9c7c5;
}
.view-lock {
  position: absolute;
  right: 24px;
  top: 24px;
  fill: #c8cccb;
  color: #b0b4b3;
}

.project .strip {
  height: 36px;
  padding-right: 10px;
}
.filter {
  width: 44px;
}
.project-search + .filter {
  width: 46px;
  border-left: 2px solid #222;
}
.project-search svg {
  left: 12px;
}
.browser {
  flex: 1;
  display: flex;
}
.tree {
  width: 230px;
  flex: none;
  border-right: 2px solid #222;
}
.node {
  height: 34px;
  display: flex;
  align-items: center;
  padding-left: 10px;
}
.node > svg,
.no-fold {
  margin-right: 7px;
}
.no-fold {
  width: 16px;
}
.node.chosen {
  height: 32px;
  margin-top: 28px;
  background: #484848;
  color: #f2f2f2;
}
.files {
  flex: 1;
  min-width: 0;
  display: flex;
  flex-direction: column;
}
.crumb {
  height: 36px;
  display: flex;
  align-items: center;
  padding: 0 13px;
  background: #3e3e3e;
  border-bottom: 2px solid #222;
}
.empty {
  margin: 18px 0 0;
  flex: 1;
  text-align: center;
  color: #7c7c7c;
}
.foot {
  height: 36px;
  display: flex;
  align-items: center;
  justify-content: flex-end;
  padding-right: 33px;
  background: #3f3f3f;
  border-top: 2px solid #1f1f1f;
}
input[type='range'] {
  appearance: none;
  width: 110px;
  height: 20px;
}
input[type='range']::-webkit-slider-runnable-track {
  height: 10px;
  border-radius: 5px;
  background: #2c2c2c;
  border-bottom: 2px solid #505050;
}
input[type='range']::-webkit-slider-thumb {
  appearance: none;
  width: 20px;
  height: 20px;
  margin-top: -6px;
  border-radius: 50%;
  background: linear-gradient(#6c6c6c, #4a4a4a);
  border: 2px solid #808080;
  box-shadow: 0 2px 2px rgba(0, 0, 0, 0.4);
}

.status {
  height: 44px;
  flex: none;
  display: flex;
  align-items: center;
  gap: 8px;
  padding: 3px 7px 0;
  border-top: 2px solid #1f1f1f;
}

.frame {
  position: absolute;
  border: 10px solid #aa2c17;
  filter: url(#crayon);
  pointer-events: none;
  z-index: 1;
}
.play-frame {
  top: -9px;
  bottom: -6px;
  left: -13px;
  width: 81px;
  border-width: 9px;
}
.hier-frame {
  inset: -5px -1px -5px -2px;
}
.scene-frame {
  inset: -4px 2px -4px 3px;
}
.project-frame {
  inset: -1px 0 -16px -2px;
}
.inspector-frame {
  inset: -10px -4px -21px 0;
}
.label {
  position: absolute;
  z-index: 2;
  transform: translate(-50%, -50%);
  font: 700 61px/60px Lato, sans-serif;
  color: #f4732e;
  white-space: nowrap;
}
.play-label {
  right: calc(100% + 24px);
  top: 50%;
  transform: translateY(-50%);
}
.hier-label {
  left: 50%;
  top: 31.6%;
}
.scene-label {
  left: 50%;
  top: 50%;
}
.project-label {
  left: 46.8%;
  top: 51%;
}
.inspector-label {
  left: 50%;
  top: 50.2%;
}
</style>
